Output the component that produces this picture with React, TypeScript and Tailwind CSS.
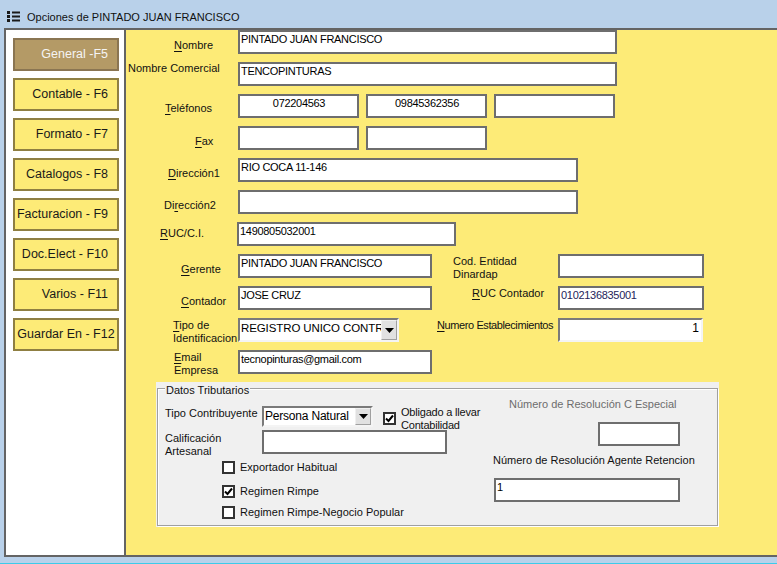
import React from "react";

type FieldProps = {
  w: number;
  h?: number;
  center?: boolean;
  color?: string;
  children?: React.ReactNode;
};

function Field({ w, h = 24, center, color, children }: FieldProps) {
  return (
    <div
      style={{ width: w, height: h }}
      className={`shrink-0 bg-white border-2 border-[#6e6e6e] overflow-hidden whitespace-nowrap text-[11px] leading-[13px] tracking-[-0.3px] pt-[1px] pl-[1px] ${
        center ? "text-center" : ""
      } ${color ?? "text-black"}`}
    >
      {children}
    </div>
  );
}

function Arrow() {
  return (
    <svg width="9" height="5" viewBox="0 0 9 5">
      <polygon points="0,0 9,0 4.5,5" fill="#000" />
    </svg>
  );
}

type SelectProps = { w: number; h: number; text: string; pt?: number; size?: string };
function Select({ w, h, text, pt = 0, size = "text-[12px] tracking-[-0.2px]" }: SelectProps) {
  return (
    <div
      style={{ width: w, height: h }}
      className="shrink-0 flex bg-white border-2 border-t-[#7a7a7a] border-l-[#7a7a7a] border-b-[#f4f4f4] border-r-[#f4f4f4]"
    >
      <div
        style={{ paddingTop: pt }}
        className={`flex-1 min-w-0 overflow-hidden whitespace-nowrap leading-[14px] pl-[1px] text-black ${size}`}
      >
        {text}
      </div>
      <div className="w-[16px] shrink-0 h-full bg-[#e1e1e1] border border-t-[#f0f0f0] border-l-[#f0f0f0] border-b-[#a0a0a0] border-r-[#a0a0a0] flex items-center justify-center">
        <Arrow />
      </div>
    </div>
  );
}

function Check({ checked }: { checked?: boolean }) {
  return (
    <div className="shrink-0 w-[13px] h-[13px] bg-white border-2 border-[#333333] flex items-center justify-center">
      {checked && (
        <svg width="9" height="9" viewBox="0 0 9 9">
          <polyline points="1,4.5 3.5,7 8,1.5" fill="none" stroke="#000" strokeWidth="2" />
        </svg>
      )}
    </div>
  );
}

function U({ children }: { children: React.ReactNode }) {
  return <span className="underline underline-offset-[2px]">{children}</span>;
}

type NavProps = { label: string; active?: boolean; center?: boolean };
function NavBtn({ label, active, center }: NavProps) {
  return (
    <div
      className={`w-[106px] h-[33px] shrink-0 flex items-center border-2 text-[12.5px] whitespace-nowrap ${
        center ? "justify-center" : "justify-end pr-[9px]"
      } ${
        active
          ? "bg-[#b49a66] border-[#8a7552] text-[#f4f4f4]"
          : "bg-[#fdeb77] border-[#8f7f42] text-[#1a1a1a]"
      }`}
    >
      {label}
    </div>
  );
}

export default function App() {
  const base = "shrink-0 text-[11px] leading-[13px] whitespace-nowrap";
  const lbl = `${base} text-[#111]`;
  return (
    <div className="w-[777px] h-[564px] overflow-hidden bg-[#b9d1ea] flex flex-col font-['Liberation_Sans',Arial,sans-serif] text-black">
      {/* Title bar */}
      <div className="h-[28px] shrink-0 flex items-start">
        <svg className="ml-[7px] mt-[11px]" width="13" height="11" viewBox="0 0 13 11">
          <rect x="0" y="0" width="3" height="3" fill="#1a1a1a" />
          <rect x="5" y="0.5" width="8" height="2" fill="#1a1a1a" />
          <rect x="0" y="4" width="3" height="3" fill="#1a1a1a" />
          <rect x="5" y="4.5" width="8" height="2" fill="#1a1a1a" />
          <rect x="0" y="8" width="3" height="3" fill="#1a1a1a" />
          <rect x="5" y="8.5" width="8" height="2" fill="#1a1a1a" />
        </svg>
        <div className="ml-[7px] pt-[11px] text-[11px] leading-[13px] text-[#111]">
          Opciones de PINTADO JUAN FRANCISCO
        </div>
      </div>

      {/* Frame */}
      <div className="flex-1 min-h-0 flex ml-[4px] border-2 border-r-0 border-[#646464]">
        {/* Left nav */}
        <div className="w-[120px] shrink-0 bg-white border-r-2 border-[#646464] flex flex-col pt-[8px] pl-[7px] gap-[7px]">
          <NavBtn label="General -F5" active />
          <NavBtn label="Contable - F6" />
          <NavBtn label="Formato - F7" />
          <NavBtn label="Catalogos - F8" />
          <NavBtn label="Facturacion - F9" />
          <NavBtn label="Doc.Elect - F10" />
          <NavBtn label="Varios - F11" />
          <NavBtn label="Guardar En - F12" center />
        </div>

        {/* Yellow form */}
        <div className="flex-1 bg-[#fdeb77] flex flex-col">
          {/* Nombre */}
          <div className="flex h-[24px]">
            <div className={`${lbl} w-[112px] pl-[48px] pt-[9px]`}>
              <U>N</U>ombre
            </div>
            <Field w={379}>PINTADO JUAN FRANCISCO</Field>
          </div>
          {/* Nombre Comercial */}
          <div className="flex h-[24px] mt-[8px]">
            <div className={`${lbl} w-[112px] pl-[2px] pt-[0px]`}>Nombre Comercial</div>
            <Field w={379}>TENCOPINTURAS</Field>
          </div>
          {/* Telefonos */}
          <div className="flex h-[24px] mt-[8px]">
            <div className={`${lbl} w-[112px] pl-[39px] pt-[8px]`}>
              <U>T</U>eléfonos
            </div>
            <Field w={121} center>072204563</Field>
            <div className="w-[7px] shrink-0" />
            <Field w={121} center>09845362356</Field>
            <div className="w-[7px] shrink-0" />
            <Field w={121} />
          </div>
          {/* Fax */}
          <div className="flex h-[24px] mt-[8px]">
            <div className={`${lbl} w-[112px] pl-[69px] pt-[9px]`}>
              <U>F</U>ax
            </div>
            <Field w={121} />
            <div className="w-[7px] shrink-0" />
            <Field w={121} />
          </div>
          {/* Direccion1 */}
          <div className="flex h-[24px] mt-[8px]">
            <div className={`${lbl} w-[112px] pl-[42px] pt-[9px]`}>
              <U>D</U>irección1
            </div>
            <Field w={340}>RIO COCA 11-146</Field>
          </div>
          {/* Direccion2 */}
          <div className="flex h-[24px] mt-[8px]">
            <div className={`${lbl} w-[112px] pl-[38px] pt-[9px]`}>
              Di<U>r</U>ección2
            </div>
            <Field w={340} />
          </div>
          {/* RUC */}
          <div className="flex h-[24px] mt-[8px]">
            <div className={`${lbl} w-[111px] pl-[34px] pt-[5px]`}>
              <U>R</U>UC/C.I.
            </div>
            <Field w={219}>1490805032001</Field>
          </div>
          {/* Gerente / Dinardap */}
          <div className="flex h-[24px] mt-[8px]">
            <div className={`${lbl} w-[112px] pl-[55px] pt-[9px]`}>
              <U>G</U>erente
            </div>
            <Field w={194}>PINTADO JUAN FRANCISCO</Field>
            <div className={`${lbl} w-[126px] pl-[21px] pt-[1px]`}>
              Cod. Entidad
              <br />
              Dinardap
            </div>
            <Field w={146} />
          </div>
          {/* Contador / RUC Contador */}
          <div className="flex h-[24px] mt-[8px]">
            <div className={`${lbl} w-[112px] pl-[55px] pt-[9px]`}>
              <U>C</U>ontador
            </div>
            <Field w={194}>JOSE CRUZ</Field>
            <div className={`${lbl} w-[126px] pl-[40px] pt-[1px]`}>
              <U>R</U>UC Contador
            </div>
            <Field w={146} color="text-[#24245a]">0102136835001</Field>
          </div>
          {/* Tipo de Identificacion / Numero Establecimientos */}
          <div className="flex h-[24px] mt-[8px]">
            <div className={`${lbl} w-[112px] pl-[47px] pt-[1px]`}>
              <U>T</U>ipo de
              <br />
              Identificacion
            </div>
            <Select w={161} h={24} text="REGISTRO UNICO CONTRI" size="text-[11.5px] tracking-[-0.1px]" pt={1} />
            <div className={`${lbl} w-[159px] pl-[38px] pt-[1px] tracking-[-0.4px]`}>
              <U>N</U>umero Establecimientos
            </div>
            <div className="shrink-0 w-[145px] h-[24px] bg-white border-2 border-t-[#7a7a7a] border-l-[#7a7a7a] border-b-[#f4f4f4] border-r-[#f4f4f4] text-right pr-[2px] text-[12px] leading-[14px] pt-[1px]">
              1
            </div>
          </div>
          {/* Email */}
          <div className="flex h-[24px] mt-[8px]">
            <div className={`${lbl} w-[112px] pl-[48px] pt-[1px]`}>
              <U>E</U>mail
              <br />
              Empresa
            </div>
            <Field w={194}>tecnopinturas@gmail.com</Field>
          </div>

          {/* Datos Tributarios panel */}
          <div className="mt-[8px] ml-[30px] w-[563px] h-[145px] bg-[#f0f0f0] flex flex-col">
            <div className="mt-[6px] mx-[1px] h-[138px] border border-[#a0a0a0] shadow-[1px_1px_0_#ffffff,inset_1px_1px_0_#ffffff] flex flex-col">
              <div className={`${lbl} -mt-[5px] ml-[7px] px-[1px] bg-[#f0f0f0] w-fit`}>Datos Tributarios</div>
              <div className="flex mt-[1px]">
                {/* left column */}
                <div className="w-[322px] shrink-0 flex flex-col pt-[8px]">
                  <div className="flex items-start h-[21px]">
                    <div className={`${lbl} w-[104px] pl-[7px] pt-[1px]`}>Tipo Contribuyente</div>
                    <Select w={111} h={21} text="Persona Natural" pt={1} />
                    <div className="ml-[10px] mt-[6px]">
                      <Check checked />
                    </div>
                    <div className={`${lbl} ml-[5px] leading-[12.5px] tracking-[-0.2px]`}>
                      Obligado a llevar
                      <br />
                      Contabilidad
                    </div>
                  </div>
                  <div className="flex h-[24px] mt-[3px]">
                    <div className={`${lbl} w-[104px] pl-[7px] pt-[2px]`}>
                      Calificación
                      <br />
                      Artesanal
                    </div>
                    <Field w={185} />
                  </div>
                  <div className="flex items-center h-[13px] mt-[7px] ml-[64px]">
                    <Check />
                    <div className={`${lbl} ml-[5px]`}>Exportador Habitual</div>
                  </div>
                  <div className="flex items-center h-[13px] mt-[11px] ml-[64px]">
                    <Check checked />
                    <div className={`${lbl} ml-[5px]`}>Regimen Rimpe</div>
                  </div>
                  <div className="flex items-center h-[13px] mt-[8px] ml-[64px]">
                    <Check />
                    <div className={`${lbl} ml-[5px]`}>Regimen Rimpe-Negocio Popular</div>
                  </div>
                </div>
                {/* right column */}
                <div className="flex flex-col">
                  <div className={`${base} pl-[29px] text-[#6d6d6d]`}>Número de Resolución C Especial</div>
                  <div className="ml-[118px] mt-[11px]">
                    <Field w={82} />
                  </div>
                  <div className={`${lbl} ml-[13px] mt-[8px]`}>Número de Resolución Agente Retencion</div>
                  <div className="ml-[14px] mt-[11px]">
                    <Field w={186}>1</Field>
                  </div>
                </div>
              </div>
            </div>
          </div>
        </div>
      </div>

      {/* Bottom strip */}
      <div className="h-[7px] shrink-0 bg-[#b9d1ea] border-b border-[#3ccbea]" />
    </div>
  );
}
